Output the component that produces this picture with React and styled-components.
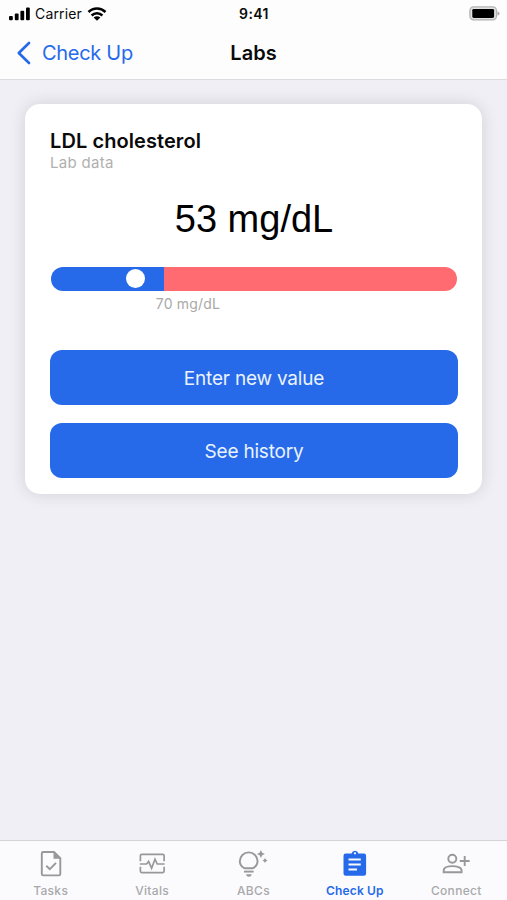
import React from "react";
import styled, { createGlobalStyle } from "styled-components";

const BLUE = "#266aea";
const GRAY = "#a9a9ac";

const GlobalStyle = createGlobalStyle`
  * { box-sizing: border-box; }
  body { margin: 0; font-family: Inter, "Liberation Sans", sans-serif; color: #0a0a0a; }
  button { font: inherit; border: 0; padding: 0; cursor: pointer; }
`;

const Screen = styled.div`
  display: flex;
  flex-direction: column;
  height: 900px;
  background: #f0eff5;
  overflow: hidden;
`;

const Header = styled.header`
  flex: none;
  height: 80px;
  background: #fdfdfe;
  border-bottom: 1px solid #dcdce0;
`;

const StatusBar = styled.div`
  display: grid;
  grid-template-columns: 1fr auto 1fr;
  align-items: center;
  height: 27px;
  padding: 0 7px 0 8px;
`;

const StatusSide = styled.div`
  display: flex;
  align-items: center;
  justify-content: ${(p) => (p.$end ? "flex-end" : "flex-start")};
`;

const Carrier = styled.span`
  margin: 0 5px 0 4px;
  font-size: 14px;
  line-height: 18px;
  letter-spacing: 0.15px;
`;

const Clock = styled.time`
  font-size: 14px;
  line-height: 18px;
  font-weight: 600;
  letter-spacing: 0.4px;
`;

const NavBar = styled.nav`
  display: grid;
  grid-template-columns: 1fr auto 1fr;
  align-items: center;
  height: 50px;
  padding: 1px 16px 0;
`;

const BackButton = styled.button`
  display: flex;
  align-items: center;
  gap: 10px;
  background: none;
  color: ${BLUE};
  font-size: 20px;
  line-height: 26px;
  letter-spacing: -0.3px;
`;

const Title = styled.h1`
  margin: 0;
  font-size: 20px;
  line-height: 26px;
  font-weight: 600;
`;

const Content = styled.main`
  flex: 1;
  padding: 24px 25px;
`;

const Card = styled.section`
  height: 390px;
  width: 457px;
  padding: 25px 24px 16px 25px;
  border-radius: 15px;
  background: #fff;
  box-shadow: 0 0 16px rgba(40, 40, 50, 0.15);
`;

const CardTitle = styled.h2`
  margin: 0;
  font-size: 20px;
  line-height: 24px;
  font-weight: 600;
  letter-spacing: 0.08px;
`;

const CardSubtitle = styled.p`
  margin: 0;
  color: #b0b0b0;
  font-size: 15px;
  line-height: 20px;
  letter-spacing: 0.3px;
`;

const Reading = styled.p`
  margin: 24px 0 0;
  text-align: center;
  color: #000;
  font-family: "Liberation Sans", Arial, sans-serif;
  font-size: 38px;
  line-height: 44px;
`;

const RangeBar = styled.div`
  display: flex;
  height: 24px;
  margin: 26px 1px 0;
  border-radius: 12px;
  overflow: hidden;
`;

const RangeSegment = styled.div`
  display: flex;
  align-items: center;
  justify-content: flex-end;
  width: ${(p) => p.$width || "auto"};
  flex: ${(p) => (p.$width ? "none" : 1)};
  padding: 0 18.5px 1px 0;
  background: ${(p) => p.$color};
`;

const Marker = styled.span`
  width: 19px;
  height: 19px;
  border-radius: 50%;
  background: #fff;
`;

const Threshold = styled.p`
  width: 80px;
  margin: 4px 0 37px 98px;
  text-align: center;
  color: #a9a9a9;
  font-size: 14px;
  line-height: 18px;
  letter-spacing: 0.2px;
  white-space: nowrap;
`;

const Action = styled.button`
  display: block;
  width: 100%;
  height: 55px;
  padding-top: 1px;
  border-radius: 12px;
  background: ${BLUE};
  color: #e9f2ff;
  font-size: 19px;
  letter-spacing: -0.2px;

  & + & { margin-top: 18px; }
`;

const TabBar = styled.nav`
  display: grid;
  flex: none;
  grid-template-columns: repeat(5, 1fr);
  height: 60px;
  border-top: 1px solid #d4d4d8;
  background: #fbfbfd;
`;

const Tab = styled.button`
  display: flex;
  flex-direction: column;
  align-items: center;
  padding-top: 8px;
  background: none;
  color: ${(p) => (p.$active ? BLUE : GRAY)};
  font-size: 12px;
  line-height: 16px;
  font-weight: ${(p) => (p.$active ? 600 : 500)};
  letter-spacing: ${(p) => (p.$active ? "0.15px" : "0.3px")};
`;

const TabIcon = styled.svg`
  display: block;
  width: 34px;
  height: 30px;
  margin-bottom: 4px;
  fill: none;
  stroke: ${(p) => (p.$active ? BLUE : "#98989b")};
  stroke-width: 1.9;
`;

const Solid = styled.path`
  fill: ${(p) => p.$fill || "#98989b"};
  stroke: none;
`;

const tabs = [
  {
    label: "Tasks",
    art: (
      <>
        <path d="M9.2 3H20L26.3 9.2V25Q26.3 26.4 24.9 26.4H9.2Q7.8 26.4 7.8 25V4.4Q7.8 3 9.2 3Z" />
        <Solid d="M19.5 3V9.8H26.6Z" />
        <path d="M12.3 16.8L15.8 20.2L22 13.8" />
      </>
    ),
  },
  {
    label: "Vitals",
    art: (
      <>
        <path strokeWidth="1.7" d="M5.4 12.3V6.7Q5.4 5.4 6.7 5.4H27.8Q29.1 5.4 29.1 6.7V12.3M5.4 17.8V22.3Q5.4 23.6 6.7 23.6H27.8Q29.1 23.6 29.1 22.3V17.8" />
        <path strokeWidth="1.7" d="M4.8 15H11.6L13.6 12.4L16.6 19.2L20 10.2L22.2 15H29.6" />
      </>
    ),
  },
  {
    label: "ABCs",
    art: (
      <>
        <path d="M8.4 19.3C5 17.3 3.8 15 3.8 12.3A8.9 8.9 0 0 1 21.6 12.3C21.6 15 20.4 17.3 17 19.3Z" />
        <path d="M8 22.6H17.6" />
        <Solid d="M10 25.2H15.8Q15.2 27.8 12.9 27.8Q10.6 27.8 10 25.2Z" />
        <Solid d="M24.9 1.1L26.2 3.8L28.9 5L26.2 6.2L24.9 8.9L23.6 6.2L20.9 5L23.6 3.8ZM29 9L29.9 10.6L31.5 11.5L29.9 12.4L29 14L28.1 12.4L26.5 11.5L28.1 10.6Z" />
      </>
    ),
  },
  {
    label: "Check Up",
    active: true,
    art: (
      <>
        <Solid
          $fill={BLUE}
          fillRule="evenodd"
          d="M7.5 4.5H13.6A3.5 3.5 0 0 1 20.4 4.5H25.9Q28.1 4.5 28.1 6.7V24.6Q28.1 26.8 25.9 26.8H7.7Q5.5 26.8 5.5 24.6V6.7Q5.5 4.5 7.7 4.5ZM17 3.2A1.1 1.1 0 1 0 17 5.4A1.1 1.1 0 1 0 17 3.2Z"
        />
        <path stroke="#f7faff" strokeWidth="2" d="M10.5 10.5H22.8M10.5 15.6H22.8M10.5 20.6H19" />
      </>
    ),
  },
  {
    label: "Connect",
    art: (
      <>
        <circle cx="13.3" cy="9.8" r="4" />
        <path d="M4.7 23.3V21.5C4.7 18.5 9.2 17.1 13.4 17.1C17.6 17.1 22.6 18.5 22.6 21.5V23.3Z" />
        <path d="M25.7 7V17M20.8 12H30.6" />
      </>
    ),
  },
];

const Signal = () => (
  <svg width="23" height="14" viewBox="0 0 23 14" aria-label="Signal">
    <rect x="1" y="9" width="3.8" height="4.2" rx="1" />
    <rect x="6.8" y="6.5" width="3.8" height="6.7" rx="1" />
    <rect x="12.4" y="3.8" width="3.8" height="9.4" rx="1" />
    <rect x="18" y="0.5" width="3.8" height="12.7" rx="1" />
  </svg>
);

const Wifi = () => (
  <svg width="20" height="14" viewBox="0 0 20 14" fill="none" stroke="#000" strokeWidth="2.5" aria-label="Wi-Fi">
    <path d="M1.5 5C6.3.3 13.7.3 18.5 5M4.6 8.5C7.7 5.5 12.3 5.5 15.4 8.5" />
    <path fill="#000" stroke="none" d="M6.6 10.4C8.6 8.7 11.4 8.7 13.4 10.4L10 13.8Z" />
  </svg>
);

const Battery = () => (
  <svg width="31" height="15" viewBox="0 0 31 15" aria-label="Battery">
    <rect x="0.9" y="0.9" width="26.6" height="13" rx="3.8" fill="#e2e2e2" stroke="#b2b2b2" strokeWidth="1.3" />
    <rect x="3.3" y="2.9" width="21.8" height="9" rx="1.4" />
    <path d="M28.5 5.2Q30.6 6 30.6 7.5T28.5 9.8Z" fill="#aaa" />
  </svg>
);

const Chevron = () => (
  <svg width="16" height="24" viewBox="0 0 16 24" fill="none" stroke={BLUE} strokeWidth="2.7" strokeLinecap="round" strokeLinejoin="round">
    <path d="M13 2L2.8 12L13 22" />
  </svg>
);

export default function App() {
  return (
    <Screen>
      <GlobalStyle />
      <Header>
        <StatusBar>
          <StatusSide>
            <Signal />
            <Carrier>Carrier</Carrier>
            <Wifi />
          </StatusSide>
          <Clock>9:41</Clock>
          <StatusSide $end>
            <Battery />
          </StatusSide>
        </StatusBar>
        <NavBar>
          <BackButton>
            <Chevron />
            Check Up
          </BackButton>
          <Title>Labs</Title>
        </NavBar>
      </Header>
      <Content>
        <Card>
          <CardTitle>LDL cholesterol</CardTitle>
          <CardSubtitle>Lab data</CardSubtitle>
          <Reading>53 mg/dL</Reading>
          <RangeBar>
            <RangeSegment $color={BLUE} $width="112.5px">
              <Marker />
            </RangeSegment>
            <RangeSegment $color="#ff6b70" />
          </RangeBar>
          <Threshold>70 mg/dL</Threshold>
          <Action>Enter new value</Action>
          <Action>See history</Action>
        </Card>
      </Content>
      <TabBar>
        {tabs.map((tab) => (
          <Tab key={tab.label} $active={tab.active}>
            <TabIcon viewBox="0 0 34 30" $active={tab.active}>
              {tab.art}
            </TabIcon>
            {tab.label}
          </Tab>
        ))}
      </TabBar>
    </Screen>
  );
}
